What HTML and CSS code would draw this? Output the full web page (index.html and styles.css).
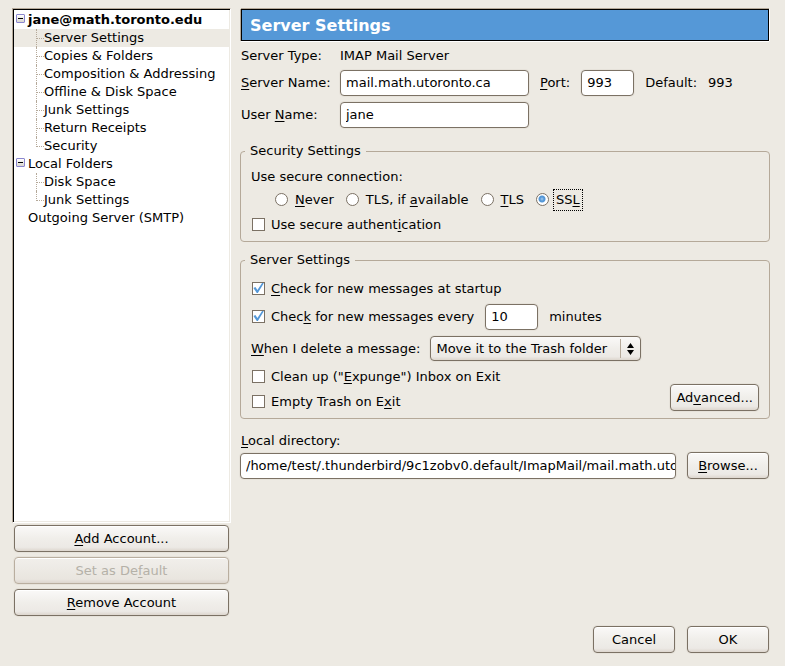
FILE: index.html
```html
<!DOCTYPE html>
<html lang="en">
<head>
    <meta charset="UTF-8">
    <meta name="viewport" content="width=device-width, initial-scale=1.0">
    <title>Account Settings</title>
    <link rel="stylesheet" href="styles.css">
</head>
<body>
    <div class="columns">
        <div class="sidebar">
            <ul class="tree">
                <li>
                    <div class="root bold"><span class="toggle"></span>jane@math.toronto.edu</div>
                    <ul class="branch">
                        <li class="selected">Server Settings</li>
                        <li>Copies &amp; Folders</li>
                        <li>Composition &amp; Addressing</li>
                        <li>Offline &amp; Disk Space</li>
                        <li>Junk Settings</li>
                        <li>Return Receipts</li>
                        <li>Security</li>
                    </ul>
                </li>
                <li>
                    <div class="root"><span class="toggle"></span>Local Folders</div>
                    <ul class="branch">
                        <li>Disk Space</li>
                        <li>Junk Settings</li>
                    </ul>
                </li>
                <li>
                    <div class="root leaf">Outgoing Server (SMTP)</div>
                </li>
            </ul>
            <div class="account-buttons">
                <button type="button"><u>A</u>dd Account...</button>
                <button type="button" disabled>Set as De<u>f</u>ault</button>
                <button type="button"><u>R</u>emove Account</button>
            </div>
        </div>

        <form class="panel" id="settings">
            <h1>Server Settings</h1>

            <div class="server">
                <span>Server Type:</span>
                <span>IMAP Mail Server</span>

                <label for="serverName"><u>S</u>erver Name:</label>
                <div class="line">
                    <input type="text" class="name" id="serverName" value="mail.math.utoronto.ca">
                    <label for="port"><u>P</u>ort:</label>
                    <input type="text" class="number" id="port" value="993">
                    <span>Default:</span>
                    <span>993</span>
                </div>

                <label for="userName">User <u>N</u>ame:</label>
                <div class="line">
                    <input type="text" class="name" id="userName" value="jane">
                </div>
            </div>

            <fieldset class="security">
                <legend>Security Settings</legend>
                <div>Use secure connection:</div>
                <div class="radios">
                    <label><input type="radio" name="secure"><span><u>N</u>ever</span></label>
                    <label><input type="radio" name="secure"><span>TLS, if <u>a</u>vailable</span></label>
                    <label><input type="radio" name="secure"><span><u>T</u>LS</span></label>
                    <label><input type="radio" name="secure" checked><span>SS<u>L</u></span></label>
                </div>
                <label class="check"><input type="checkbox"><span>Use secure authent<u>i</u>cation</span></label>
            </fieldset>

            <fieldset class="messages">
                <legend>Server Settings</legend>
                <label class="check"><input type="checkbox" checked><span><u>C</u>heck for new messages at startup</span></label>
                <div class="line every">
                    <label class="check"><input type="checkbox" checked><span>Chec<u>k</u> for new messages every</span></label>
                    <input type="text" class="number" id="minutes" value="10">
                    <label for="minutes">minutes</label>
                </div>
                <div class="delete">
                    <label for="deleteModel"><u>W</u>hen I delete a message:</label>
                    <div class="dropdown">
                        <select id="deleteModel">
                            <option>Move it to the Trash folder</option>
                            <option>Mark it as deleted</option>
                            <option>Remove it immediately</option>
                        </select>
                        <svg width="7" height="12" viewBox="0 0 7 12"><path d="M3.5 0L7 5H0zM0 7h7L3.5 12z"/></svg>
                    </div>
                </div>
                <div class="exit">
                    <div class="exit-options">
                        <label class="check"><input type="checkbox"><span>Clean up ("<u>E</u>xpunge") Inbox on Exit</span></label>
                        <label class="check"><input type="checkbox"><span>Empty Trash on E<u>x</u>it</span></label>
                    </div>
                    <button type="button">Ad<u>v</u>anced...</button>
                </div>
            </fieldset>

            <label class="directory-label" for="directory"><u>L</u>ocal directory:</label>
            <div class="line directory-line">
                <input type="text" class="directory" id="directory" value="/home/test/.thunderbird/9c1zobv0.default/ImapMail/mail.math.utoronto.ca">
                <button type="button"><u>B</u>rowse...</button>
            </div>
        </form>
    </div>

    <div class="dialog-buttons">
        <button type="button">Cancel</button>
        <button type="submit" form="settings">OK</button>
    </div>
</body>
</html>
```
FILE: styles.css
```css
* {
    box-sizing: border-box;
}

body {
    margin: 0;
    padding: 8px 15px 13px 12px;
    min-height: 100vh;
    display: flex;
    flex-direction: column;
    gap: 10px;
    background-color: #edeae3;
    color: #000;
    font-family: "DejaVu Sans", sans-serif;
    font-size: 13px;
    line-height: 18px;
}

u {
    text-underline-offset: 2px;
    text-decoration-thickness: 1px;
}

input, select, button {
    margin: 0;
    font: inherit;
    color: inherit;
}

.columns {
    flex: 1;
    display: flex;
    gap: 9px;
}

/* Account tree */
.sidebar {
    width: 219px;
    flex-shrink: 0;
    display: flex;
    flex-direction: column;
}

.tree {
    flex: 1;
    background-color: #fff;
    border: 1px solid;
    border-color: #b5a999 #fff #fff #b5a999;
    box-shadow: inset 1px 1px 0 #000, inset -1px -1px 0 #edeae3;
    padding: 2px 1px 1px;
    white-space: nowrap;
}

ul {
    list-style: none;
    margin: 0;
    padding: 0;
}

.root {
    display: flex;
    gap: 3px;
    padding-left: 2px;
}

.bold {
    font-weight: bold;
}

.leaf {
    padding-left: 14px;
}

.toggle {
    width: 9px;
    height: 9px;
    margin-top: 3px;
    border: 1px solid #8a86cf;
    border-radius: 1px;
    background: linear-gradient(#000, #000) center / 5px 1px no-repeat, linear-gradient(#fff, #d8d6d0);
}

.branch li {
    position: relative;
    padding-left: 30px;
}

.branch li::before,
.branch li::after {
    content: "";
    position: absolute;
    left: 22px;
    top: 0;
}

.branch li::before {
    height: 100%;
    border-left: 1px dotted #b5a999;
}

.branch li:last-child::before {
    height: 10px;
}

.branch li::after {
    top: 9px;
    width: 8px;
    border-top: 1px dotted #b5a999;
}

.selected {
    background-color: #edeae3;
}

/* Buttons */
button {
    height: 27px;
    min-width: 82px;
    padding: 0 5px;
    border: 1px solid #7b7164;
    border-radius: 4px;
    background: linear-gradient(#faf9f8, #f0eeea 50%, #ece9e5 85%, #ddd6ce);
    box-shadow: inset 0 1px 0 #fff, 0 0 0 1px #e6e2da;
}

button:disabled {
    color: #b5b1a8;
    border-color: #b9ae9f;
    background: linear-gradient(#f1efeb, #e9e5df 85%, #ddd6ce);
}

.account-buttons {
    display: flex;
    flex-direction: column;
    gap: 5px;
    padding: 2px 2px 0;
}

/* Right panel */
.panel {
    flex: 1;
    min-width: 0;
}

h1 {
    margin: 1px 1px 0;
    padding: 6px 8px 4px;
    border: 1px solid #000;
    box-shadow: 0 -1px 0 #b5a999, -1px 0 0 #b5a999, 0 1px 0 #fff, 1px 0 0 #fff;
    background-color: #5598d7;
    color: #fff;
    font-size: 16px;
    line-height: 20px;
}

.server {
    display: grid;
    grid-template-columns: 99px 1fr;
    row-gap: 4px;
    align-items: center;
    padding: 6px 0 0 1px;
    margin-bottom: 13px;
}

.line {
    display: flex;
    align-items: center;
    gap: 11px;
}

.server .line {
    min-height: 28px;
}

input[type="text"] {
    height: 26px;
    padding: 0 0 1px 5px;
    border: 1px solid #7b7164;
    border-radius: 4px;
    background-color: #fff;
    box-shadow: 0 0 0 1px #e6e2da;
}

.name {
    width: 189px;
}

.number {
    width: 53px;
}

.directory {
    flex: 1;
    min-width: 0;
}

fieldset {
    margin: 0 0 9px;
    padding: 8px 10px 7px;
    border: 1px solid #b5a999;
    border-radius: 4px;
    min-width: 0;
}

legend {
    margin-left: -6px;
    padding: 0 5px;
}

.radios {
    display: flex;
    gap: 9px;
    margin: 3px 0 5px 24px;
}

.radios label {
    display: flex;
    align-items: center;
    gap: 4px;
}

.radios span {
    padding: 1px 2px;
    border: 1px dotted transparent;
}

.radios input:checked + span {
    border-color: #000;
}

input[type="radio"],
input[type="checkbox"] {
    appearance: none;
    width: 13px;
    height: 13px;
    margin-bottom: 2px;
    border: 1px solid #7b7164;
    background-color: #fff;
}

input[type="radio"] {
    border-radius: 50%;
}

input[type="radio"]:checked {
    background: radial-gradient(circle at 5px 5px, #a9cdf0 0, #5598d7 2px, #5598d7 3px, transparent 4px) #fff;
}

.check {
    display: flex;
    align-items: center;
    gap: 6px;
    padding-left: 1px;
}

.check input:checked::before {
    content: "";
    display: block;
    height: 11px;
    background-color: #5598d7;
    clip-path: polygon(4% 50%, 22% 42%, 40% 68%, 84% 2%, 98% 6%, 44% 96%, 34% 96%);
}

.messages {
    padding-top: 11px;
}

.every {
    margin: 6px 0;
}

.delete {
    display: flex;
    align-items: center;
    gap: 10px;
}

.dropdown {
    position: relative;
}

select {
    appearance: none;
    display: block;
    width: 211px;
    height: 25px;
    padding: 0 5px;
    border: 1px solid #7b7164;
    border-radius: 4px;
    background: linear-gradient(#b5a999, #b5a999) 189px center / 1px 19px no-repeat, linear-gradient(#faf9f8, #f0eeea 50%, #ece9e5 85%, #ddd6ce);
    box-shadow: 0 0 0 1px #e6e2da;
}

.dropdown svg {
    position: absolute;
    right: 7px;
    top: 7px;
    pointer-events: none;
}

.exit {
    display: flex;
    justify-content: space-between;
    align-items: flex-end;
    margin-top: 7px;
}

.exit-options {
    display: flex;
    flex-direction: column;
    gap: 7px;
}

.directory-label {
    display: block;
    margin: 13px 0 2px 1px;
}

.directory-line {
    padding-right: 1px;
}

.dialog-buttons {
    display: flex;
    justify-content: flex-end;
    gap: 12px;
    padding-right: 1px;
}
```
